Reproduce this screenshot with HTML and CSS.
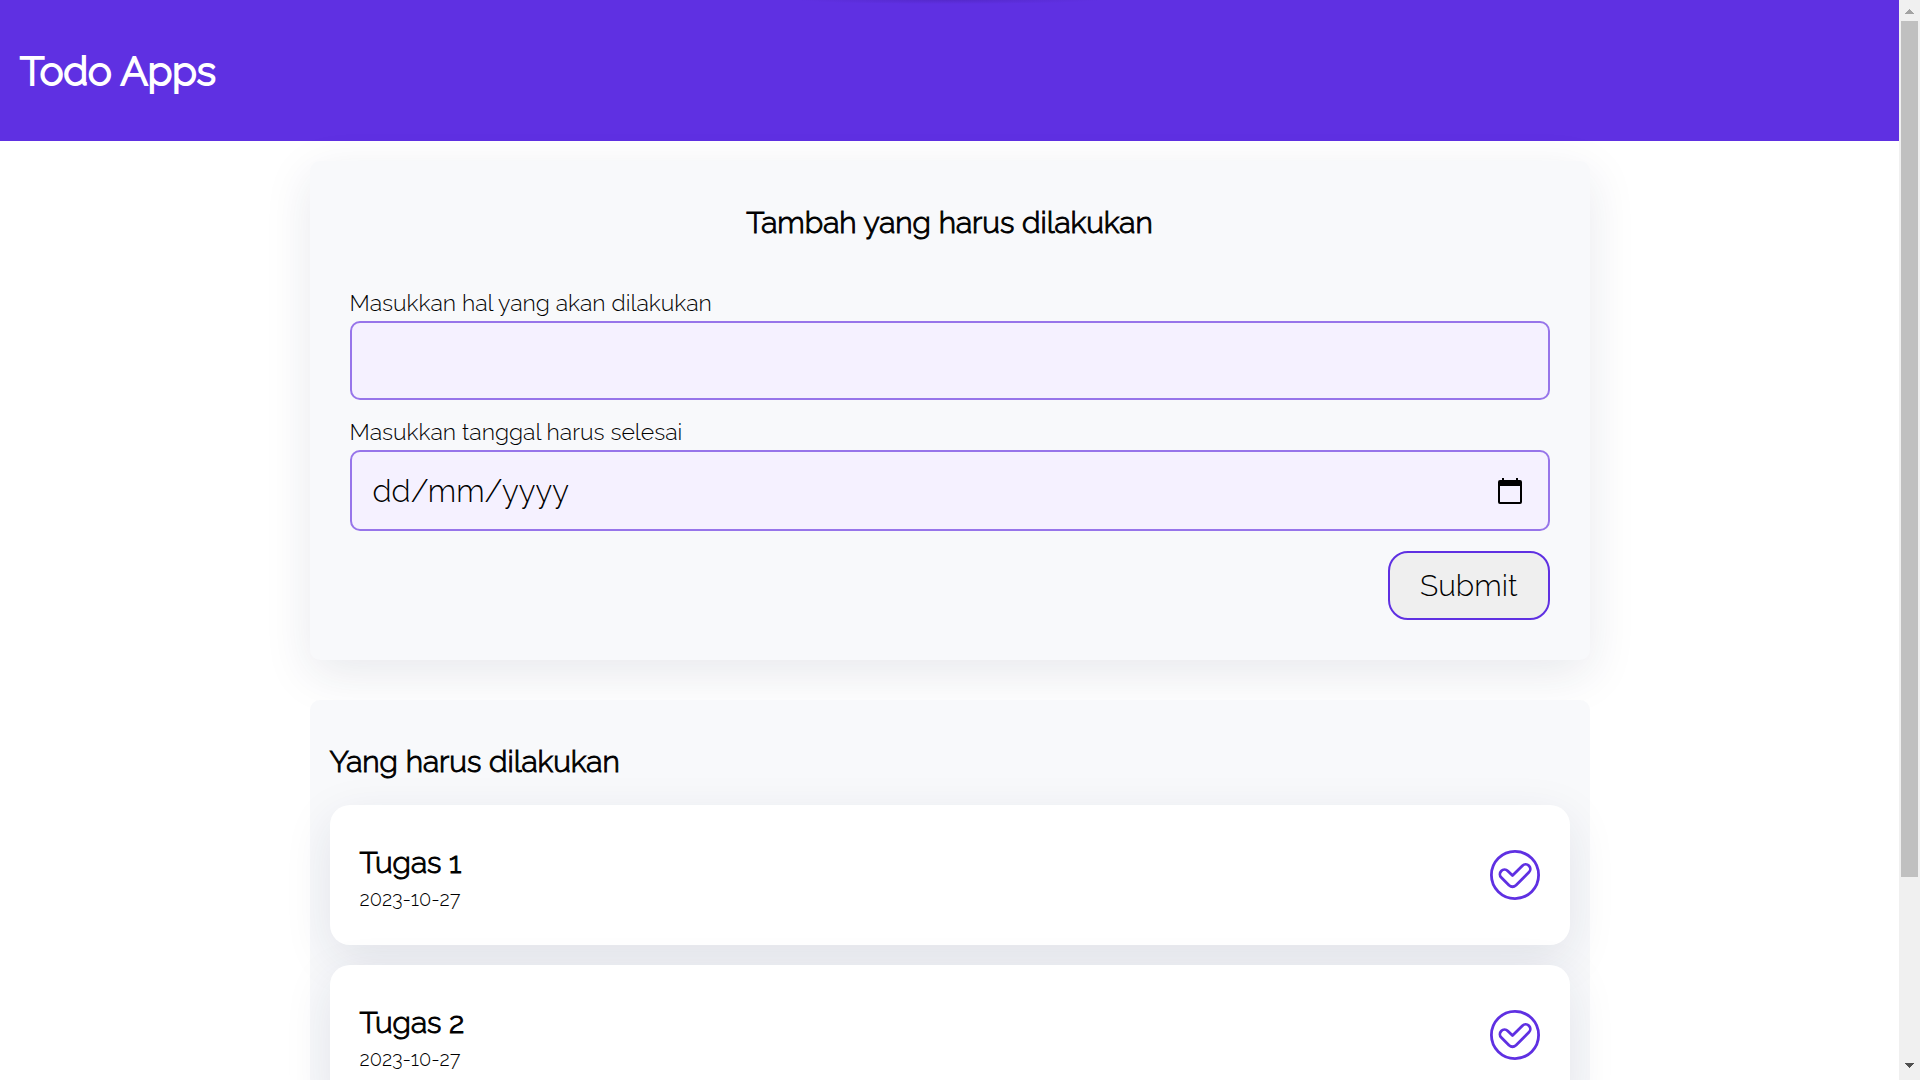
FILE: index.html
```html
<!DOCTYPE html>
<html lang="id">
<head>
  <meta charset="utf-8">
  <meta name="viewport" content="width=device-width, initial-scale=1">
  <title>Todo Apps</title>
  <link rel="stylesheet" href="styles.css">
</head>
<body>
  <svg class="sprite" aria-hidden="true">
    <symbol id="check-outline" viewBox="0 0 50 50">
      <g fill="none" stroke="currentColor" stroke-linejoin="round">
        <circle cx="25" cy="25" r="23.6" stroke-width="2.8"/>
        <path stroke-width="2.8" d="M22.5 25.6 L32.4 15.7 A4.6 4.6 0 0 1 38.9 22.3 L26 35.2 Q22.5 38.2 19 35.2 L11.3 27.5 A4.6 4.6 0 0 1 17.8 20.9 Z"/>
      </g>
    </symbol>
  </svg>
  <div class="page">
    <header class="head-bar">
      <h1 class="head-title">Todo Apps</h1>
    </header>
    <main class="content">
      <section class="card input-section">
        <h2 class="card-title centered">Tambah yang harus dilakukan</h2>
        <form class="form">
          <div class="field">
            <label for="title">Masukkan hal yang akan dilakukan</label>
            <input class="text-box" type="text" id="title" name="title">
          </div>
          <div class="field">
            <label for="date">Masukkan tanggal harus selesai</label>
            <div class="date-box">
              <input class="date-input" type="text" id="date" name="date" placeholder="dd/mm/yyyy">
              <button class="picker" type="button" aria-label="Pilih tanggal">
                <svg viewBox="0 0 24 26" width="24" height="26" aria-hidden="true">
                  <path fill="currentColor" fill-rule="evenodd" d="M4 0h2v2h12V0h2v2h2a2 2 0 0 1 2 2v20a2 2 0 0 1-2 2H2a2 2 0 0 1-2-2V4a2 2 0 0 1 2-2h2zM2 8v16h20V8z"/>
                </svg>
              </button>
            </div>
          </div>
          <button class="submit" type="submit">Submit</button>
        </form>
      </section>
      <section class="card list-section">
        <h2 class="card-title">Yang harus dilakukan</h2>
        <div class="list">
          <article class="item">
            <div class="item-text">
              <h3 class="item-title">Tugas 1</h3>
              <p class="item-date">2023-10-27</p>
            </div>
            <button class="check" type="button" aria-label="Selesai"><svg width="50" height="50"><use href="#check-outline"/></svg></button>
          </article>
          <article class="item">
            <div class="item-text">
              <h3 class="item-title">Tugas 2</h3>
              <p class="item-date">2023-10-27</p>
            </div>
            <button class="check" type="button" aria-label="Selesai"><svg width="50" height="50"><use href="#check-outline"/></svg></button>
          </article>
        </div>
      </section>
    </main>
  </div>
  <div class="scrollbar" aria-hidden="true">
    <svg class="arrow arrow-up" width="9" height="5" viewBox="0 0 9 5"><path d="M4 0h1v1h1v1h1v1h1v1h1v1H0V4h1V3h1V2h1V1h1z"/></svg>
    <div class="thumb"></div>
    <svg class="arrow arrow-down" width="9" height="5" viewBox="0 0 9 5"><path d="M0 0h9v1H8v1H7v1H6v1H5v1H4V4H3V3H2V2H1V1H0z"/></svg>
  </div>
</body>
</html>
```
FILE: styles.css
```css
:root {
  --purple: #5f30e2;
  --shadow: 0 14px 48px rgba(34, 40, 78, 0.1);
}

* {
  box-sizing: border-box;
}

body {
  margin: 0;
  height: 100vh;
  display: flex;
  overflow: hidden;
  background: #fff;
  color: #000;
  font-family: Raleway, Lato, sans-serif;
  font-weight: 300;
}

h1, h2, h3, p {
  margin: 0;
}

h1, h2, h3 {
  font-weight: 300;
  -webkit-text-stroke: 1px currentColor;
}

button, input {
  font: inherit;
  color: inherit;
}

.sprite {
  position: absolute;
  width: 0;
  height: 0;
}

.page {
  flex: 1;
  min-width: 0;
  overflow: hidden;
}

.head-bar {
  padding: 46px 20px;
  background: radial-gradient(150px 4px at 50% 0, #5529cb, var(--purple)) var(--purple);
  color: #fff;
}

.head-title {
  font-size: 40px;
  line-height: 49px;
  -webkit-text-stroke-width: 2px;
}

.content {
  display: flex;
  flex-direction: column;
  gap: 40px;
  max-width: 1280px;
  margin: 20px auto;
}

.card {
  border-radius: 10px;
  background: #f8f9fb;
}

.input-section {
  padding: 40px;
  box-shadow: var(--shadow);
}

.list-section {
  padding: 40px 20px;
}

.card-title {
  font-size: 30px;
  line-height: 44px;
}

.centered {
  text-align: center;
}

.form {
  display: flex;
  flex-direction: column;
  gap: 20px;
  margin-top: 46px;
}

.field {
  display: flex;
  flex-direction: column;
  gap: 6px;
  font-size: 23px;
  line-height: 24px;
}

.text-box,
.date-box {
  width: 100%;
  border: 2px solid #9775ea;
  border-radius: 10px;
  background: #f5f1ff;
}

.text-box {
  height: 79px;
  padding: 20px;
  font-size: 30px;
}

.date-box {
  display: flex;
  align-items: center;
  height: 81px;
  padding: 0 26px 0 21px;
}

.date-input {
  flex: 1;
  min-width: 0;
  padding: 0;
  border: 0;
  background: none;
  font-size: 31px;
  line-height: 40px;
}

.date-input::placeholder {
  color: #000;
  opacity: 1;
}

.picker,
.check {
  display: flex;
  padding: 0;
  border: 0;
  background: none;
  cursor: pointer;
}

.check {
  color: var(--purple);
}

.submit {
  align-self: flex-end;
  padding: 12px 30px;
  border: 2px solid var(--purple);
  border-radius: 20px;
  background: #efefef;
  font-size: 30px;
  line-height: 41px;
  cursor: pointer;
}

.list {
  display: flex;
  flex-direction: column;
  gap: 20px;
  margin-top: 21px;
}

.item {
  display: flex;
  align-items: center;
  justify-content: space-between;
  padding: 34px 30px;
  border-radius: 20px;
  background: #fff;
  box-shadow: var(--shadow);
}

.item-title {
  font-size: 30px;
  line-height: 48px;
}

.item-date {
  font-size: 20px;
  line-height: 24px;
}

.scrollbar {
  display: flex;
  flex-direction: column;
  align-items: center;
  width: 21px;
  padding: 9px 2px 12px;
  background: #f0f0f0;
}

.thumb {
  width: 17px;
  height: calc(80vh - 8px);
  margin-top: 7px;
  background: #c0c0c0;
}

.arrow-up {
  fill: #a3a3a3;
}

.arrow-down {
  margin-top: auto;
  fill: #505050;
}
```
